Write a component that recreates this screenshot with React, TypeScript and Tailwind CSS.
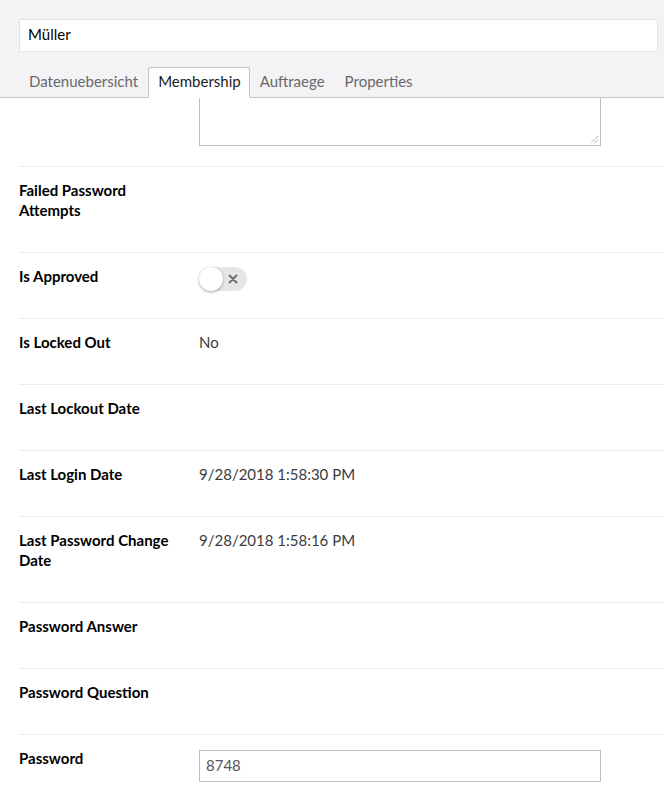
import React from "react";

const rows: { label: React.ReactNode; value?: React.ReactNode; kind?: string }[] = [
  { label: <>Failed Password<br />Attempts</> },
  { label: "Is Approved", kind: "toggle" },
  { label: "Is Locked Out", value: "No" },
  { label: "Last Lockout Date" },
  { label: "Last Login Date", value: "9/28/2018 1:58:30 PM" },
  { label: <>Last Password Change<br />Date</>, value: "9/28/2018 1:58:16 PM" },
  { label: "Password Answer" },
  { label: "Password Question" },
  { label: "Password", kind: "input" },
];

function Toggle() {
  return (
    <div className="relative w-[48px] h-[24px] rounded-full bg-[#e6e6e8] shrink-0">
      <div className="absolute left-0 top-0 w-[24px] h-[24px] rounded-full bg-white shadow-[0_1px_3px_rgba(0,0,0,0.35)]" />
      <svg className="absolute left-[29px] top-[7px]" width="10" height="10" viewBox="0 0 10 10">
        <path d="M1.5 1.5 L8.5 8.5 M8.5 1.5 L1.5 8.5" stroke="#707070" strokeWidth="2" strokeLinecap="round" />
      </svg>
    </div>
  );
}

export default function App() {
  return (
    <div className="w-[664px] h-[792px] overflow-hidden bg-white text-[15px]" style={{ fontFamily: "Lato, 'Open Sans', sans-serif" }}>
      <div className="bg-[#f3f3f5] pl-[19px] pr-[6px] pt-[19px] border-b border-[#c4c3c7]">
        <div className="h-[33px] bg-white border border-[#e3e3e6] flex items-center pl-[8px] pb-[2px] text-[15px] text-black font-normal">
          Müller
        </div>
        <div className="flex mt-[15px] h-[31px] -mb-px text-[15px]">
          <div className="px-[9px] pb-[2px] flex items-center text-[#68676b] border border-transparent">Datenuebersicht</div>
          <div className="pl-[9px] pr-[8px] pb-[2px] flex items-center text-[#1b1b1d] bg-white border border-[#c4c3c7] border-b-white rounded-t-[3px]">Membership</div>
          <div className="px-[9px] pb-[2px] flex items-center text-[#68676b] border border-transparent">Auftraege</div>
          <div className="px-[9px] pb-[2px] flex items-center text-[#68676b] border border-transparent">Properties</div>
        </div>
      </div>
      <div className="pl-[19px]">
        <div className="flex">
          <div className="w-[180px] shrink-0" />
          <div className="relative w-[402px] h-[48px] border-x border-b border-[#bdbcc0] mb-[20px]">
            <svg className="absolute right-[1px] bottom-[1px]" width="9" height="9" viewBox="0 0 9 9">
              <path d="M8 1 L1 8 M8 4.5 L4.5 8" stroke="#777" strokeWidth="1" strokeDasharray="1 1" />
            </svg>
          </div>
        </div>
        {rows.map((r, i) => (
          <div key={i} className="flex border-t border-[#ececee] pt-[13px] pb-[32px]">
            <div className="w-[180px] shrink-0 font-bold text-[#000] leading-[20px]">{r.label}</div>
            <div className="flex-1 leading-[20px] text-[#3c3c40]">
              {r.kind === "toggle" ? (
                <div className="h-[20px] flex items-center"><div className="mt-[5px]"><Toggle /></div></div>
              ) : r.kind === "input" ? (
                <div className="mt-[2px] w-[402px] h-[32px] border border-[#bdbcc0] flex items-center pl-[6px] pb-[3px] text-[#555459] text-[15px]">8748</div>
              ) : (
                r.value
              )}
            </div>
          </div>
        ))}
      </div>
    </div>
  );
}
